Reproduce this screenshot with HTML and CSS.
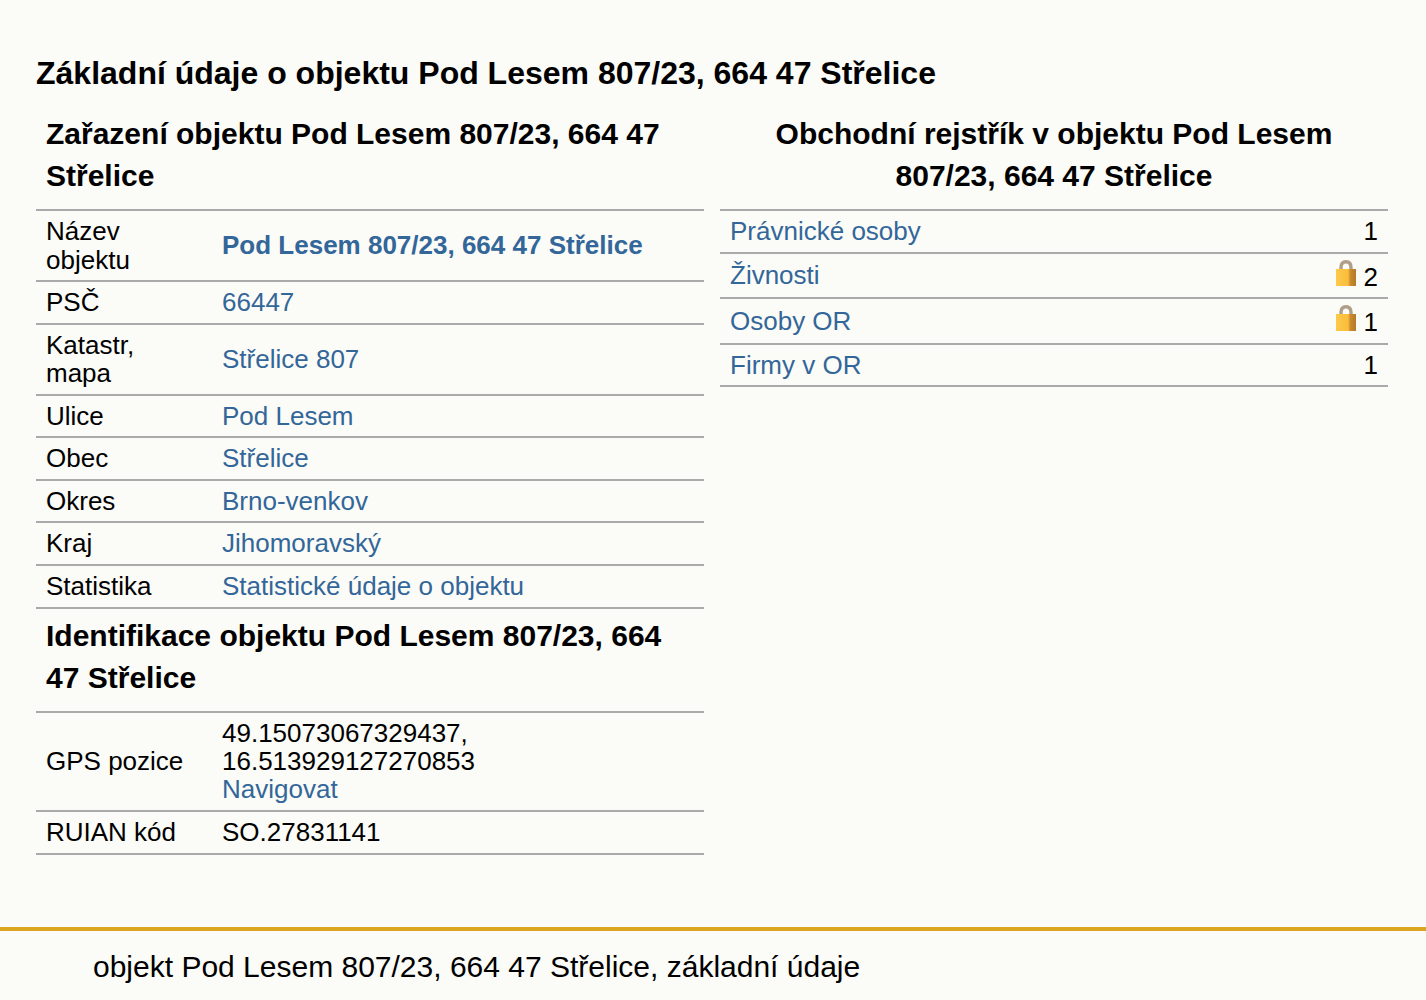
FILE: index.html
```html
<!DOCTYPE html>
<html lang="cs">
<head>
<meta charset="utf-8">
<title>Základní údaje o objektu</title>
<link rel="stylesheet" href="styles.css">
</head>
<body>
<svg class="defs" width="0" height="0" aria-hidden="true">
  <defs>
    <linearGradient id="lockBody" x1="0" x2="1" y1="0" y2="0">
      <stop offset="0" stop-color="#fdc94a"/>
      <stop offset="0.6" stop-color="#fbbd3c"/>
      <stop offset="0.72" stop-color="#c98a2c"/>
      <stop offset="1" stop-color="#b27a2a"/>
    </linearGradient>
    <symbol id="lock" viewBox="0 0 20 26">
      <path d="M5 11V7.500C5 3.500 7 1.700 10 1.700S15 3.500 15 7.500V11" fill="none" stroke="#b09e88" stroke-width="3.400"/>
      <rect x="0" y="9" width="20" height="17" fill="url(#lockBody)"/>
    </symbol>
  </defs>
</svg>
<main class="page">
  <h1 class="title">Základní údaje o objektu Pod Lesem 807/23, 664 47 Střelice</h1>
  <div class="columns">
    <section class="column">
      <h2 class="subtitle">Zařazení objektu Pod Lesem 807/23, 664 47 Střelice</h2>
      <table class="info">
        <tr><th>Název objektu</th><td><a href="#" class="strong">Pod Lesem 807/23, 664 47 Střelice</a></td></tr>
        <tr><th>PSČ</th><td><a href="#">66447</a></td></tr>
        <tr><th>Katastr, mapa</th><td><a href="#">Střelice 807</a></td></tr>
        <tr><th>Ulice</th><td><a href="#">Pod Lesem</a></td></tr>
        <tr><th>Obec</th><td><a href="#">Střelice</a></td></tr>
        <tr><th>Okres</th><td><a href="#">Brno-venkov</a></td></tr>
        <tr><th>Kraj</th><td><a href="#">Jihomoravský</a></td></tr>
        <tr><th>Statistika</th><td><a href="#">Statistické údaje o objektu</a></td></tr>
      </table>
      <h2 class="subtitle">Identifikace objektu Pod Lesem 807/23, 664 47 Střelice</h2>
      <table class="info">
        <tr><th>GPS pozice</th><td>49.15073067329437, 16.513929127270853<br><a href="#">Navigovat</a></td></tr>
        <tr><th>RUIAN kód</th><td>SO.27831141</td></tr>
      </table>
    </section>
    <section class="column">
      <h2 class="subtitle centered">Obchodní rejstřík v objektu Pod Lesem 807/23, 664 47 Střelice</h2>
      <table class="info counts">
        <tr><td><a href="#">Právnické osoby</a></td><td class="num">1</td></tr>
        <tr><td><a href="#">Živnosti</a></td><td class="num"><svg class="lock"><use href="#lock"/></svg> 2</td></tr>
        <tr><td><a href="#">Osoby OR</a></td><td class="num"><svg class="lock"><use href="#lock"/></svg> 1</td></tr>
        <tr><td><a href="#">Firmy v OR</a></td><td class="num">1</td></tr>
      </table>
    </section>
  </div>
</main>
<footer class="footer">objekt Pod Lesem 807/23, 664 47 Střelice, základní údaje</footer>
</body>
</html>
```
FILE: styles.css
```css
html, body {
  margin: 0;
  padding: 0;
  background: #fbfbf7;
}
body {
  height: 1000px;
  overflow: hidden;
  font-family: "Liberation Sans", Arial, sans-serif;
  font-size: 26px;
  line-height: 28.4px;
  color: #000;
}
.defs {
  position: absolute;
}
.page {
  padding: 53px 38px 0 36px;
  height: 927px;
  box-sizing: border-box;
}
.title {
  margin: 0 0 20px;
  font-size: 32px;
  line-height: 40px;
  font-weight: bold;
}
.columns {
  display: flex;
  gap: 16px;
}
.column {
  flex: 1 1 0;
  min-width: 0;
}
.subtitle {
  margin: 0;
  padding: 0 10px 12px;
  font-size: 30px;
  line-height: 42px;
  font-weight: bold;
}
.centered {
  text-align: center;
}
.info {
  width: 100%;
  border-collapse: collapse;
  border-top: 2px solid #aaa;
}
.info tr {
  border-bottom: 2px solid #aaa;
}
.info th,
.info td {
  padding: 6.100px 10px;
  text-align: left;
  font-weight: normal;
  vertical-align: middle;
}
.info th {
  width: 156px;
}
.info + .subtitle {
  padding-top: 6px;
}
.info a {
  color: #369;
  text-decoration: none;
}
.info a.strong {
  font-weight: bold;
}
.counts .num {
  text-align: right;
  white-space: nowrap;
}
.lock {
  width: 20px;
  height: 26px;
  vertical-align: 0;
}
.footer {
  border-top: 4px solid #daa520;
  padding: 18px 0 0 93px;
  font-size: 30px;
  line-height: 36px;
}
```
